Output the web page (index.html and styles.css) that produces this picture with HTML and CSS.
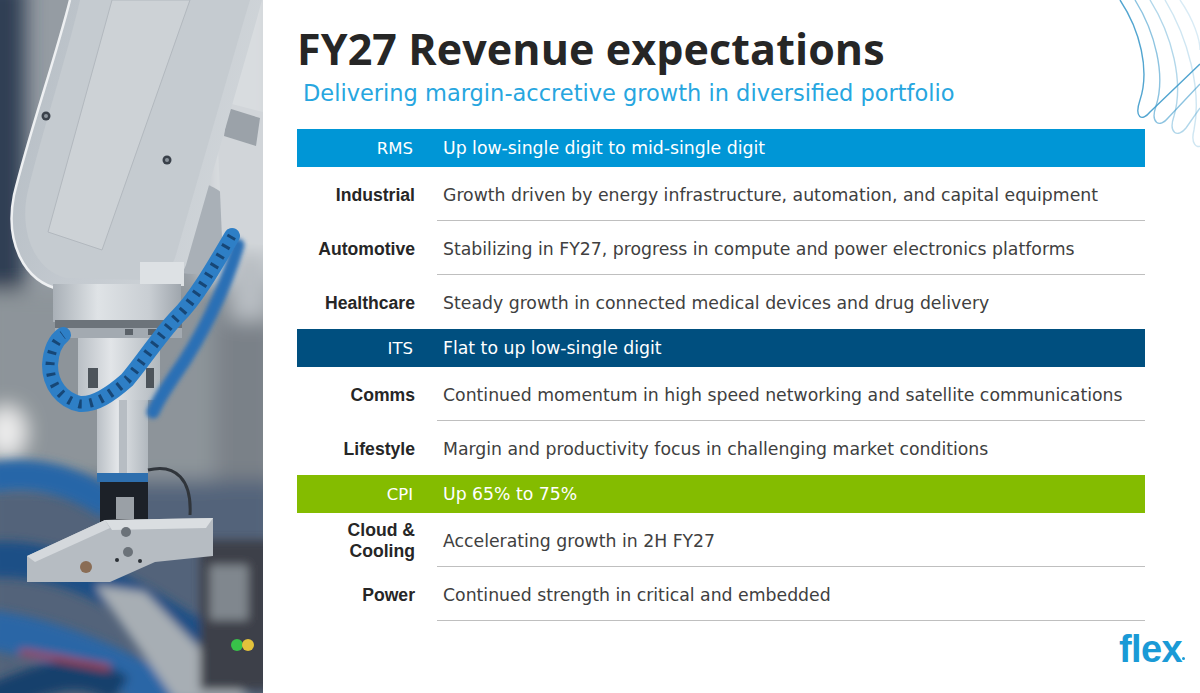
FILE: index.html
```html
<!DOCTYPE html>
<html lang="en">
<head>
<meta charset="utf-8">
<title>FY27 Revenue expectations</title>
<link rel="stylesheet" href="styles.css">
</head>
<body>
<div class="slide">
  <div class="photo">
    <svg class="photo-svg" viewBox="0 0 263 693" width="263" height="693" xmlns="http://www.w3.org/2000/svg">
      <defs>
        <filter id="b10" x="-20%" y="-20%" width="140%" height="140%"><feGaussianBlur stdDeviation="10"/></filter>
        <filter id="b5" x="-20%" y="-20%" width="140%" height="140%"><feGaussianBlur stdDeviation="5"/></filter>
        <filter id="b2" x="-20%" y="-20%" width="140%" height="140%"><feGaussianBlur stdDeviation="2"/></filter>
        <filter id="b07"><feGaussianBlur stdDeviation="0.7"/></filter>
        <linearGradient id="armg" x1="0" y1="0" x2="1" y2="0.3">
          <stop offset="0" stop-color="#b4bcc3"/>
          <stop offset="0.5" stop-color="#c4cad0"/>
          <stop offset="1" stop-color="#d0d5d9"/>
        </linearGradient>
        <linearGradient id="cyl" x1="0" y1="0" x2="1" y2="0">
          <stop offset="0" stop-color="#a9b0b7"/>
          <stop offset="0.35" stop-color="#dfe3e6"/>
          <stop offset="0.75" stop-color="#c9ced3"/>
          <stop offset="1" stop-color="#9fa6ad"/>
        </linearGradient>
        <linearGradient id="col" x1="0" y1="0" x2="1" y2="0">
          <stop offset="0" stop-color="#b9bfc5"/>
          <stop offset="0.4" stop-color="#e2e5e8"/>
          <stop offset="1" stop-color="#b1b8be"/>
        </linearGradient>
      </defs>
      <rect width="263" height="693" fill="#959ca3"/>
      <g filter="url(#b10)">
        <rect x="-20" y="-20" width="45" height="320" fill="#2f3e53"/>
        <rect x="200" y="-20" width="80" height="300" fill="#d8dcdf"/>
        <rect x="-20" y="290" width="300" height="200" fill="#8d949a"/>
        <ellipse cx="6" cy="432" rx="20" ry="26" fill="#ececec"/>
        <rect x="215" y="290" width="60" height="190" fill="#7a8188"/>
        <rect x="230" y="250" width="40" height="70" fill="#b8bdc2"/>
        <rect x="-20" y="480" width="300" height="230" fill="#52647a"/>
      </g>
      <g filter="url(#b5)">
        <path d="M-10,478 C40,468 80,485 110,505" stroke="#2766a8" stroke-width="30" fill="none"/>
        <path d="M-10,560 C60,555 120,590 200,640" stroke="#1d4f86" stroke-width="36" fill="none"/>
        <path d="M-10,630 C70,640 140,680 190,710" stroke="#2a66a6" stroke-width="40" fill="none"/>
        <path d="M-10,700 C40,680 80,660 120,690" stroke="#173f6c" stroke-width="30" fill="none"/>
        <polygon points="95,585 145,592 250,700 175,700" fill="#a7aeb4"/>
        <rect x="200" y="540" width="70" height="150" fill="#3c4148"/>
        <rect x="210" y="565" width="38" height="55" fill="#80878e"/>
        <path d="M20,652 C50,656 85,664 110,668" stroke="#b0392d" stroke-width="5" fill="none"/>
      </g>
      <circle cx="192" cy="228" r="46" fill="#a9b0b7"/>
      <path d="M216,100 L263,112 L263,245 L222,238 Z" fill="#d1d5d9"/>
      <path d="M228,108 L260,118 L256,146 L224,136 Z" fill="#9ba2a9"/>
      <path d="M70,0 C55,60 30,130 14,195 C5,240 22,282 62,290 L150,292 C170,290 180,280 186,265 L256,22 L262,0 Z" fill="url(#armg)"/>
      <path d="M80,0 C66,60 42,132 27,195 C20,232 34,270 66,278 L148,280 C162,278 170,270 175,258 L244,20 L250,0 Z" fill="#c5cbd0"/>
      <path d="M70,0 C55,60 30,130 14,195 C5,240 22,282 62,290" stroke="#eef0f2" stroke-width="2.5" fill="none"/>
      <path d="M112,0 L190,0 L102,250 L48,232 Z" fill="#cdd2d6" stroke="#b2b8be" stroke-width="1"/>
      <circle cx="46" cy="116" r="4.5" fill="#3a414a"/>
      <circle cx="46" cy="116" r="2" fill="#8b939b"/>
      <circle cx="167" cy="160" r="4.5" fill="#3a414a"/>
      <circle cx="167" cy="160" r="2" fill="#8b939b"/>
      <rect x="140" y="262" width="44" height="24" fill="#dde1e4"/>
      <rect x="53" y="284" width="128" height="38" fill="url(#cyl)"/>
      <rect x="55" y="320" width="127" height="8" fill="#6c737a"/>
      <rect x="55" y="328" width="127" height="10" fill="#a3aab1"/>
      <rect x="60" y="329" width="8" height="6" fill="#5b6269"/>
      <rect x="125" y="329" width="8" height="6" fill="#5b6269"/>
      <rect x="148" y="329" width="8" height="6" fill="#5b6269"/>
      <rect x="78" y="338" width="82" height="62" fill="url(#col)"/>
      <rect x="88" y="368" width="10" height="20" fill="#4d545b"/>
      <rect x="146" y="368" width="8" height="20" fill="#4d545b"/>
      <rect x="97" y="400" width="51" height="73" fill="url(#col)"/>
      <rect x="119" y="400" width="8" height="73" fill="#b7bdc3"/>
      <rect x="97" y="473" width="51" height="9" fill="#2e6fae"/>
      <rect x="100" y="482" width="48" height="40" fill="#1c2128"/>
      <rect x="116" y="497" width="18" height="22" fill="#9aa0a6"/>
      <path d="M148,470 C176,463 192,480 190,515" stroke="#30353b" stroke-width="3" fill="none"/>
      <polygon points="27,556 105,520 213,518 213,556 155,562 110,582 27,582" fill="#b6bcc2"/>
      <polygon points="105,520 213,518 206,528 112,530" fill="#dadee1"/>
      <polygon points="27,556 105,520 110,528 35,562" fill="#d4d8dc"/>
      <circle cx="126" cy="532" r="5" fill="#6b7279"/>
      <circle cx="128" cy="552" r="5" fill="#6b7279"/>
      <circle cx="86" cy="567" r="6" fill="#8a6d55"/>
      <circle cx="117" cy="560" r="2" fill="#2b3036"/>
      <circle cx="140" cy="561" r="2" fill="#2b3036"/>
      <g filter="url(#b2)">
        <path d="M238,245 C225,290 200,340 175,375 C165,390 158,400 153,412" stroke="#2c6fb5" stroke-width="13" fill="none" stroke-linecap="round"/>
      </g>
      <g filter="url(#b07)">
        <path d="M232,236 C215,265 195,300 177,317 C160,335 140,365 127,380 C110,395 95,405 80,404 C62,400 50,385 50,365 C51,350 56,340 63,335" stroke="#2f7fc6" stroke-width="16" fill="none" stroke-linecap="round"/>
        <path d="M232,236 C215,265 195,300 177,317 C160,335 140,365 127,380 C110,395 95,405 80,404 C62,400 50,385 50,365 C51,350 56,340 63,335" stroke="#12345c" stroke-width="9" fill="none" stroke-dasharray="3 8" opacity="0.75"/>
      </g>
      <circle cx="237" cy="645" r="6" fill="#39c24a" filter="url(#b07)"/>
      <circle cx="248" cy="645" r="6" fill="#e3c23a" filter="url(#b07)"/>
    </svg>
  </div>

  <main class="content">
    <h1 class="title">FY27 Revenue expectations</h1>
    <p class="subtitle">Delivering margin-accretive growth in diversified portfolio</p>

    <div class="table">
      <div class="row bar rms"><div class="label">RMS</div><div class="desc">Up low-single digit to mid-single digit</div></div>
      <div class="row"><div class="label">Industrial</div><div class="desc">Growth driven by energy infrastructure, automation, and capital equipment</div></div>
      <div class="row"><div class="label">Automotive</div><div class="desc">Stabilizing in FY27, progress in compute and power electronics platforms</div></div>
      <div class="row noline"><div class="label">Healthcare</div><div class="desc">Steady growth in connected medical devices and drug delivery</div></div>
      <div class="row bar its"><div class="label">ITS</div><div class="desc">Flat to up low-single digit</div></div>
      <div class="row"><div class="label">Comms</div><div class="desc">Continued momentum in high speed networking and satellite communications</div></div>
      <div class="row noline"><div class="label">Lifestyle</div><div class="desc">Margin and productivity focus in challenging market conditions</div></div>
      <div class="row bar cpi"><div class="label">CPI</div><div class="desc">Up 65% to 75%</div></div>
      <div class="row"><div class="label">Cloud &amp;<br>Cooling</div><div class="desc">Accelerating growth in 2H FY27</div></div>
      <div class="row"><div class="label">Power</div><div class="desc">Continued strength in critical and embedded</div></div>
    </div>

    <footer class="footer"><span class="logo">flex</span></footer>
  </main>

  <svg class="swirl" viewBox="0 0 90 160" width="90" height="160" xmlns="http://www.w3.org/2000/svg">
    <g fill="none" stroke="#3f9bcb" stroke-width="1.4">
      <path d="M10,0 C30,30 40,70 30,100 C24,118 32,122 40,112 L90,64" opacity="0.9"/>
      <path d="M25,0 C45,32 56,75 46,106 C40,124 50,128 58,118 L90,84" opacity="0.6"/>
      <path d="M40,0 C62,35 74,82 64,116 C58,134 68,138 76,128 L90,108" opacity="0.4"/>
      <path d="M55,0 C78,38 92,90 84,130 C80,145 88,148 90,146" opacity="0.25"/>
      <path d="M70,0 C84,20 90,40 90,50" opacity="0.2"/>
    </g>
  </svg>
</div>
</body>
</html>
```
FILE: styles.css
```css
* { box-sizing: border-box; }
html, body { margin: 0; padding: 0; background: #fff; }

.slide {
  position: relative;
  display: flex;
  width: 1200px;
  height: 693px;
  overflow: hidden;
  background: #fff;
}

.photo { flex: none; width: 263px; height: 693px; }
.photo-svg { display: block; }

.content {
  flex: 1;
  display: flex;
  flex-direction: column;
  padding: 25px 55px 0 34px;
}

.title {
  margin: 0;
  font-family: "Open Sans", "Liberation Sans", sans-serif;
  font-weight: 700;
  font-size: 43px;
  line-height: 48px;
  color: #262626;
  letter-spacing: 0.1px;
}

.subtitle {
  margin: 6px 0 0 6px;
  font-family: "DejaVu Sans", "Liberation Sans", sans-serif;
  font-size: 22.5px;
  line-height: 28px;
  color: #27a6df;
}

.table { margin-top: 22px; }

.row {
  display: grid;
  grid-template-columns: 140px 1fr;
  height: 54px;
}

.label {
  display: flex;
  align-items: center;
  justify-content: flex-end;
  text-align: right;
  padding: 2px 22px 0 0;
  font-family: "Liberation Sans", Arial, sans-serif;
  font-weight: 700;
  font-size: 17.6px;
  line-height: 21px;
  color: #262626;
}

.desc {
  display: flex;
  align-items: center;
  padding: 2px 0 0 6px;
  border-bottom: 1px solid #bfbfbf;
  font-family: "DejaVu Sans", "Liberation Sans", sans-serif;
  font-size: 17.3px;
  color: #404040;
}

.row.noline .desc { border-bottom: none; }

.row.bar { height: 38px; }
.row.bar .label {
  font-family: "DejaVu Sans", "Liberation Sans", sans-serif;
  font-weight: 400;
  font-size: 16.5px;
  color: #fff;
  padding: 0 24px 0 0;
}
.row.bar .desc { border-bottom: none; color: #fff; padding-top: 0; }
.rms { background: #0096d6; }
.its { background: #004f7f; }
.cpi { background: #84bc00; }

.footer {
  display: flex;
  justify-content: flex-end;
  margin-top: 8px;
  margin-right: -37px;
}

.logo {
  position: relative;
  font-family: "Liberation Sans", Arial, sans-serif;
  font-weight: 700;
  font-size: 38px;
  line-height: 40px;
  letter-spacing: -0.6px;
  color: #1a9ad6;
}
.logo::after {
  content: "";
  position: absolute;
  right: -3px;
  bottom: 9px;
  width: 3px;
  height: 3px;
  border-radius: 50%;
  background: #1a9ad6;
}

.swirl {
  position: absolute;
  top: 0;
  right: 0;
}
```
